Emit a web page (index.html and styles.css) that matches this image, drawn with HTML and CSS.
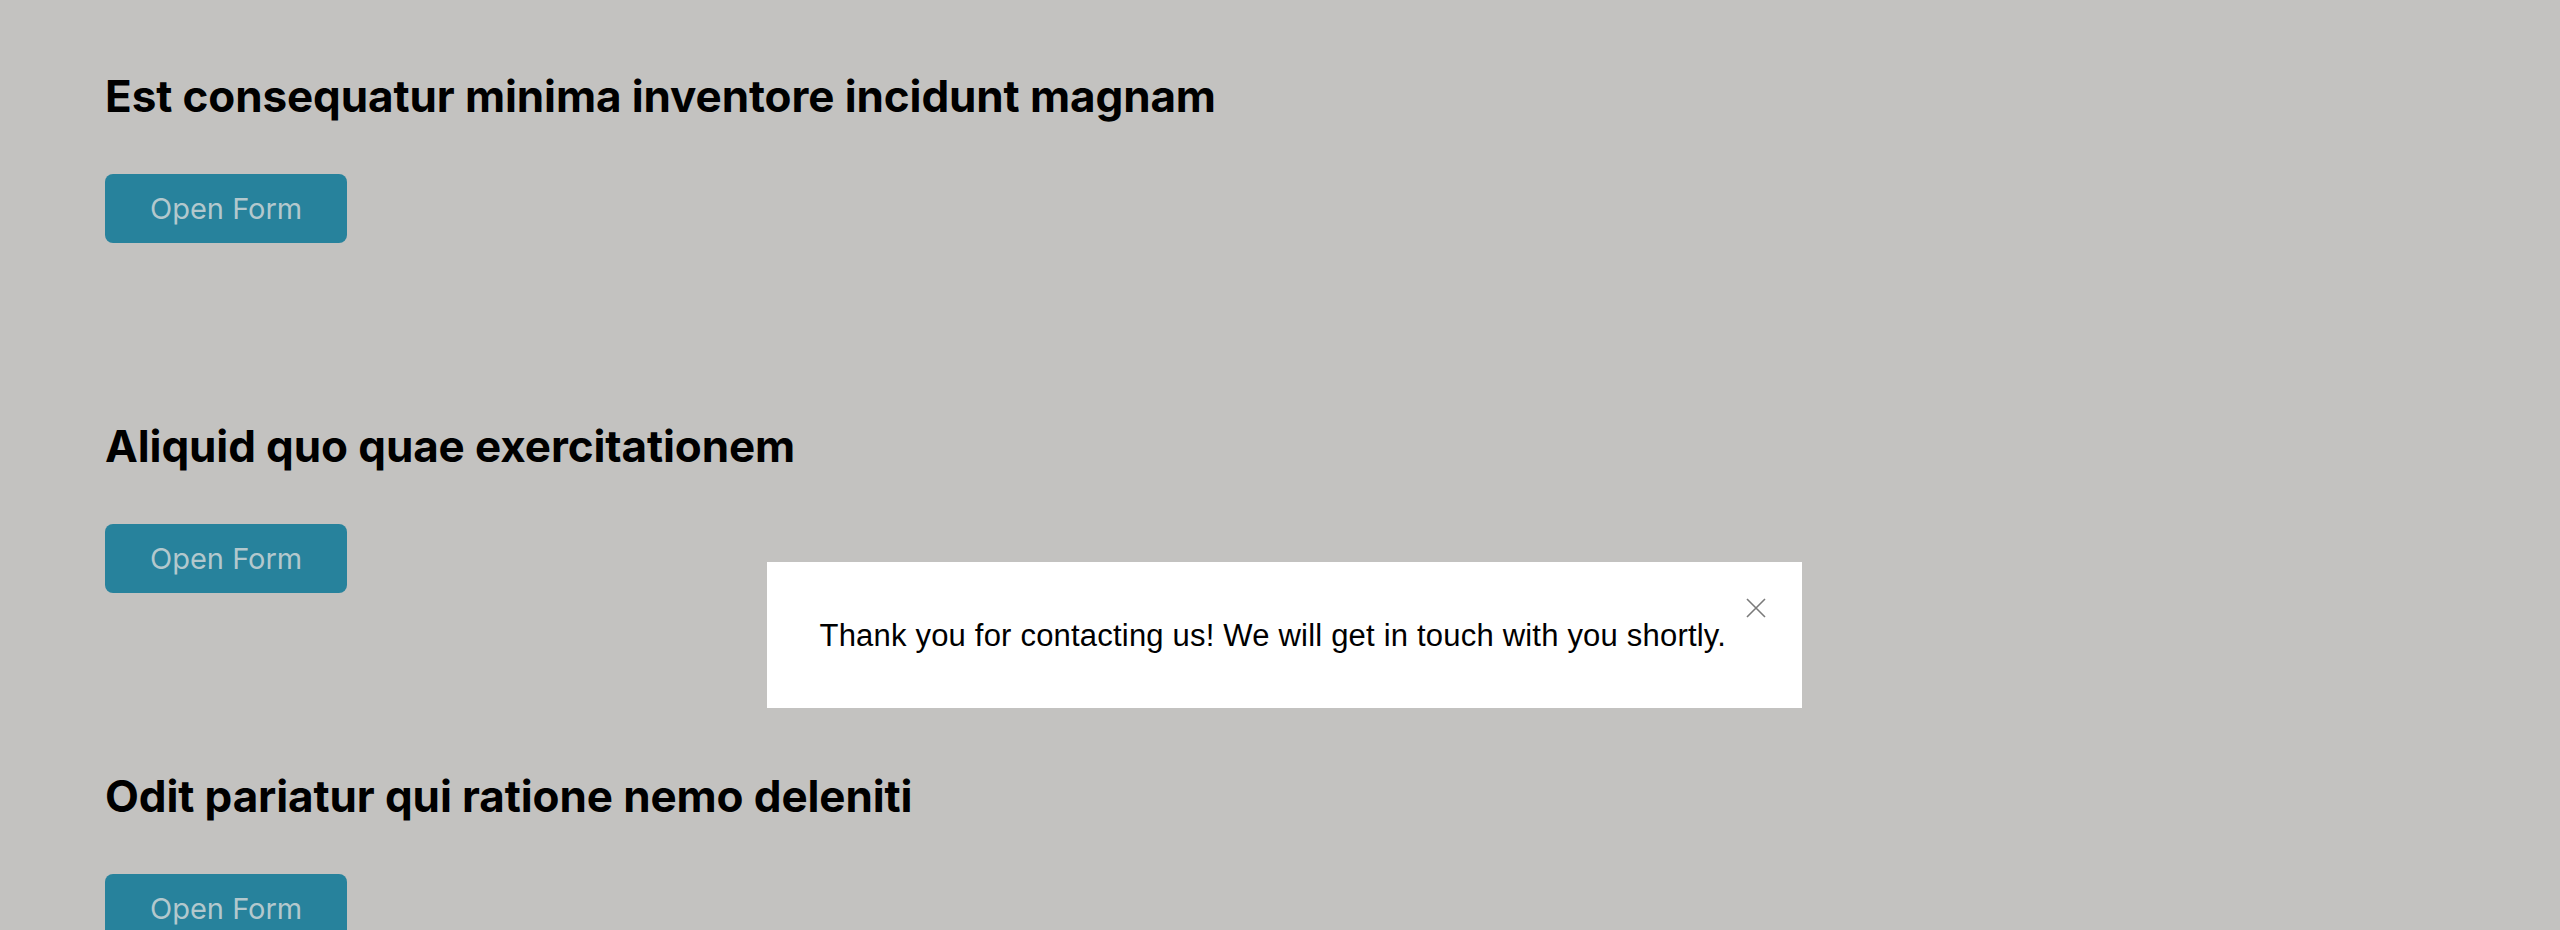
FILE: index.html
```html
<!DOCTYPE html>
<html>
<head>
  <title>Contact Forms</title>
  <link rel="stylesheet" href="styles.css">
</head>
<body>
  <div class="container">
    <div class="section">
      <h2>Est consequatur minima inventore incidunt magnam</h2>
      <button class="open-btn">Open Form</button>
    </div>

    <div class="section">
      <h2>Aliquid quo quae exercitationem</h2>
      <button class="open-btn">Open Form</button>
    </div>

    <div class="section">
      <h2>Odit pariatur qui ratione nemo deleniti</h2>
      <button class="open-btn">Open Form</button>
    </div>
  </div>

  <!-- success dialog shown after submitting -->
  <div class="overlay">
    <div class="dialog">
      <button class="close-btn" aria-label="Close">
        <svg width="20" height="20" viewBox="0 0 20 20">
          <path d="M1 1 L19 19 M19 1 L1 19" stroke="#7a7a7a" stroke-width="1.6" fill="none"/>
        </svg>
      </button>
      <p class="message">Thank you for contacting us! We will get in touch with you shortly.</p>
    </div>
  </div>
</body>
</html>
```

FILE: styles.css
```css
body {
  margin: 0;
  font-family: Inter, "Noto Sans", sans-serif;
  background-color: #c3c2c0;
  color: #000;
}
.container {
  padding: 70px 105px 0;
}
.section {
  margin-bottom: 177px;
}
.section:last-child {
  margin-bottom: 0;
}
h2 {
  margin: 0;
  font-size: 44px;
  line-height: 53px;
  font-weight: 700;
  letter-spacing: -0.1px;
}
.open-btn {
  display: block;
  margin-top: 51px;
  background-color: #27829c;
  color: #b3c8cd;
  font-family: Inter, "Noto Sans", sans-serif;
  font-size: 29px;
  line-height: 37px;
  padding: 16px 45px;
  border: none;
  border-radius: 8px;
  cursor: pointer;
}
.overlay {
  position: fixed;
  top: 0;
  left: 0;
  right: 0;
  bottom: 0;
  display: flex;
  justify-content: center;
  align-items: flex-start;
  padding: 562px 0 0 8px;
}
.dialog {
  position: relative;
  width: 1035px;
  box-sizing: border-box;
  background-color: #fff;
  padding: 56px 53px 54px;
}
.message {
  margin: 0;
  font-family: "Liberation Sans", Arial, sans-serif;
  font-size: 31px;
  line-height: 36px;
  letter-spacing: 0.2px;
  white-space: nowrap;
}
.close-btn {
  position: absolute;
  top: 36px;
  right: 36px;
  width: 20px;
  height: 20px;
  padding: 0;
  border: none;
  background: none;
  cursor: pointer;
}
.close-btn svg {
  display: block;
}
```
